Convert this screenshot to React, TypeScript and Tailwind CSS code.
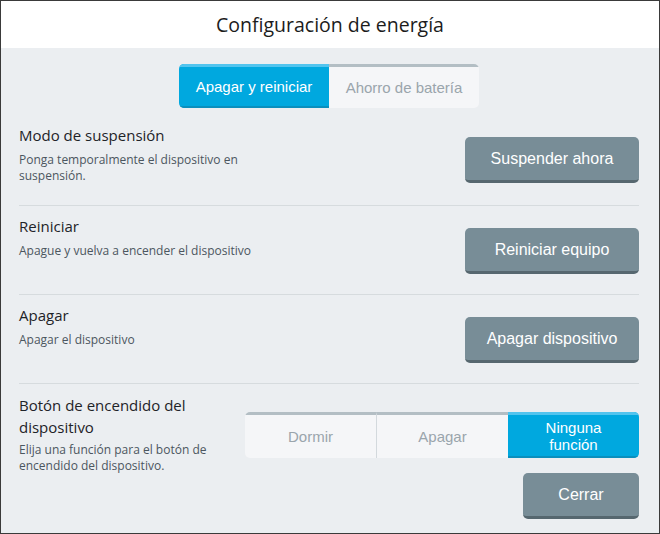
const open = "font-['Open_Sans',sans-serif]";
const arial = "font-['Liberation_Sans',Arial,sans-serif]";

function GrayButton({ label, width }: { label: string; width: string }) {
  return (
    <button
      className={`${width} h-[46px] rounded-[5px] bg-[#788d97] border-b-[3px] border-[#56676f] text-white text-[16px] ${arial}`}
    >
      {label}
    </button>
  );
}

function Row({
  title,
  desc,
  button,
  first,
}: {
  title: string;
  desc: string;
  button: string;
  first?: boolean;
}) {
  return (
    <div
      className={`flex justify-between items-start ${
        first ? "h-[90px]" : "h-[89px] border-t border-[#d6dbde]"
      }`}
    >
      <div className={`w-[244px] pt-[10px] ${open}`}>
        <div className="text-[15px] leading-[21px] text-[#1e2328]">{title}</div>
        <div className="mt-[6px] text-[12px] leading-[16px] text-[#4b5660]">{desc}</div>
      </div>
      <div className="pt-[22px]">
        <GrayButton label={button} width="w-[174px]" />
      </div>
    </div>
  );
}

function Segment({
  label,
  active,
  className,
}: {
  label: React.ReactNode;
  active?: boolean;
  className?: string;
}) {
  return (
    <div
      className={`flex-1 flex items-center justify-center text-center leading-[17px] text-[15px] ${arial} ${
        active
          ? "bg-[#00a8df] text-white border-t-[3px] border-[#52c4ee] border-b-[2px] border-b-[#0a8fbd]"
          : "bg-[#f5f6f8] text-[#9aa5ac] border-t-[3px] border-[#b3bec4]"
      } ${className ?? ""}`}
    >
      {label}
    </div>
  );
}

export default function App() {
  return (
    <div className="w-[660px] h-[534px] border border-[#3a3a3a] bg-[#ebeef1] flex flex-col overflow-hidden">
      <div className={`h-[47px] bg-white flex items-center justify-center text-[19.5px] text-[#1c1c1c] ${open}`}>
        Configuración de energía
      </div>

      <div className="pl-[18px] pr-[20px] flex flex-col">
        <div className="flex justify-center mt-[16px]">
          <div className="flex w-[300px] h-[44px] rounded-[5px] overflow-hidden">
            <Segment label="Apagar y reiniciar" active />
            <Segment label="Ahorro de batería" />
          </div>
        </div>

        <div className="mt-[7px]">
          <Row
            first
            title="Modo de suspensión"
            desc="Ponga temporalmente el dispositivo en suspensión."
            button="Suspender ahora"
          />
          <Row title="Reiniciar" desc="Apague y vuelva a encender el dispositivo" button="Reiniciar equipo" />
          <Row title="Apagar" desc="Apagar el dispositivo" button="Apagar dispositivo" />

          <div className="flex justify-between items-start border-t border-[#d6dbde]">
            <div className={`w-[210px] pt-[10px] ${open}`}>
              <div className="text-[15px] leading-[22px] text-[#1e2328]">Botón de encendido del dispositivo</div>
              <div className="mt-[4px] text-[12px] leading-[16px] text-[#4b5660]">
                Elija una función para el botón de encendido del dispositivo.
              </div>
            </div>
            <div className="pt-[28px] flex flex-col items-end gap-[15px]">
              <div className="flex w-[394px] h-[46px] rounded-[5px] overflow-hidden">
                <Segment label="Dormir" className="border-r border-r-[#d3d9dd]" />
                <Segment label="Apagar" />
                <Segment label={<span>Ninguna<br />función</span>} active />
              </div>
              <GrayButton label="Cerrar" width="w-[116px]" />
            </div>
          </div>
        </div>
      </div>
    </div>
  );
}
